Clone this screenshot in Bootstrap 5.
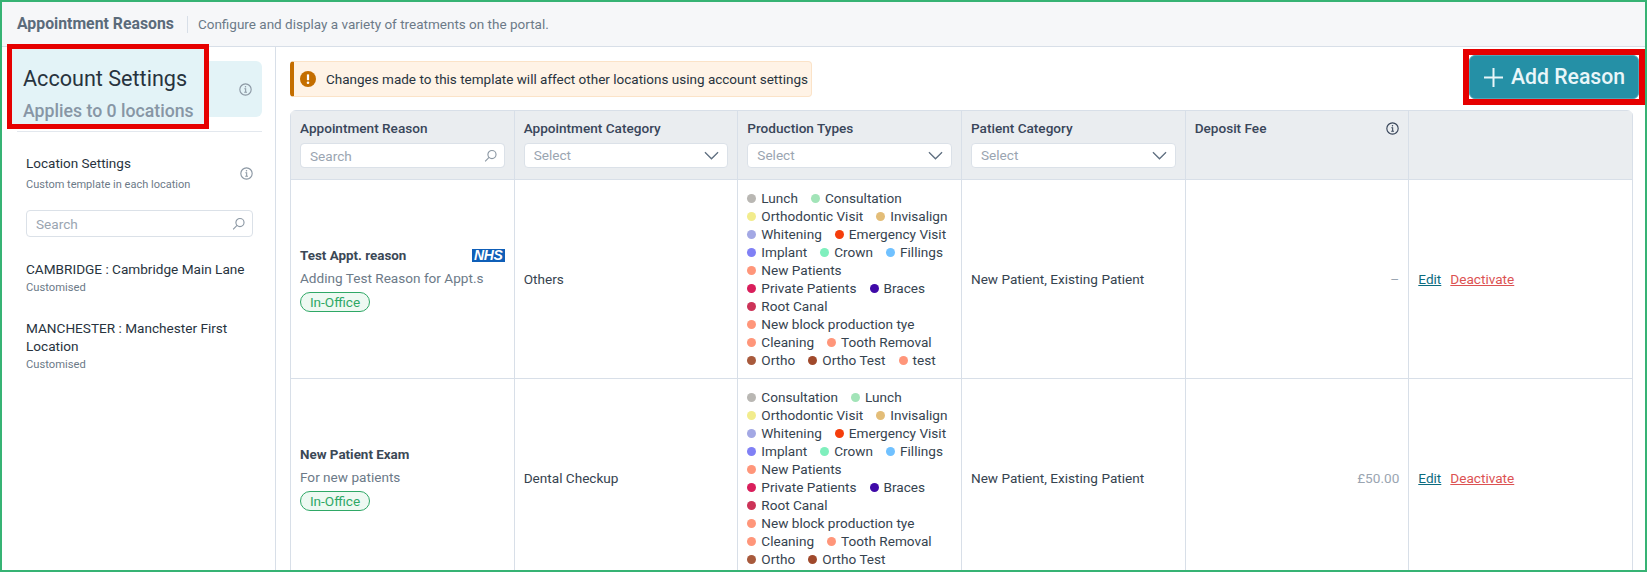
<!doctype html>
<html lang="en">
<head>
<meta charset="utf-8">
<title>Appointment Reasons</title>
<link href="https://cdn.jsdelivr.net/npm/bootstrap@5.3.0/dist/css/bootstrap.min.css" rel="stylesheet">
<style>
html,body{margin:0;height:572px;overflow:hidden;background:#fff}
body{font-family:Roboto,"Liberation Sans",sans-serif;font-size:13.6px;color:#36434f}
.shot{height:572px;border:2px solid #36b374;overflow:hidden;background:#fff}
.page-head{height:45px;background:#f6f7f9;border-bottom:1px solid #d8dfe8;padding-left:15px}
.page-title{font-size:15.8px;font-weight:700;color:#5b6b7b;margin:0}
.page-sub{font-size:13.5px;color:#6c7a88;border-left:1px solid #d8dfe8;margin-left:13px;padding-left:10px;line-height:17px}
.body-wrap{height:523px}
.side-col{width:274px;flex:none;border-right:1px solid #d8dfe8;padding:14px 13px 0 15px}
.acct-panel{height:56px;background:#e3f3f7;border-radius:6px}
.acct-mark{position:absolute;left:-10px;top:-17px;width:202px;height:85px;border:5px solid #e60000;background:#e3f3f7;padding:14px 0 0 11px}
.acct-name{font-size:21.6px;line-height:32px;color:#28333e}
.acct-sub{font-size:17.7px;line-height:26px;font-weight:500;color:#8796a5;margin-top:3px;white-space:nowrap}
.info-ico{width:13px;height:13px;color:#8c98a4;flex:none}
.acct-panel .info-ico{margin-right:2px}
.side-rule{border-top:1px solid #e3e8ee;margin-top:14px}
.loc-head{padding:22px 9px 0 9px}
.loc-title{font-size:13.5px;line-height:18px;color:#28333e}
.loc-note{font-size:11px;line-height:14px;color:#6c7a88;margin-top:6px}
.field-wrap{position:relative}
.side-search{margin:18px 9px 0 9px}
.form-control.fld,.form-select.fld{height:25px;min-height:25px;padding:0 9px;font-size:13.6px;line-height:23px;border-color:#dbe1e8;border-radius:4px;color:#9aa5b1;background-color:#fff}
.side-search .form-control.fld{height:27px;line-height:25px}
.form-control.fld::placeholder{color:#9aa5b1;opacity:1}
.form-select.fld{background-image:url("data:image/svg+xml,%3csvg xmlns='http://www.w3.org/2000/svg' viewBox='0 0 16 9'%3e%3cpath fill='none' stroke='%235f6f80' stroke-width='1.4' d='M1 1l7 7 7-7'/%3e%3c/svg%3e");background-position:right 8px center;background-size:15px 9px}
.search-ico{position:absolute;right:8px;top:50%;transform:translateY(-50%);width:13px;height:13px;color:#8c98a4}
.loc-list{margin:23px 9px 0 9px}
.loc-item{margin-bottom:24px}
.loc-name{font-size:13.6px;line-height:18px;color:#28333e;margin-right:-4px}
.loc-state{font-size:11.2px;line-height:14px;color:#6c7a88;margin-top:3px}
.main-col{min-width:0;flex:1;padding-top:2px}
.top-row{height:61px;padding-left:14px}
.warn-box{height:36px;margin-top:12px;background:#fff3e6;border:1px solid #fbe3c8;border-left:4px solid #c46e00;border-radius:4px;padding:0 2px 0 6px;gap:10px;font-size:13.5px;color:#28333e;width:522px}
.warn-ico{width:16px;height:16px;flex:none}
.add-frame{border:6px solid #e60000;height:56px;width:182px;flex:none}
.btn.add-btn{width:100%;height:100%;padding:0 0 0 14px;border:1px solid #4ea6b8;border-radius:6px;background:#2590a6;color:#e9f6f9;font-size:21.2px;font-weight:500;line-height:1;gap:8px;display:flex;align-items:center}
.add-btn svg{width:19px;height:19px;flex:none}
.tbl-wrap{margin:0 12px 0 14px;border-radius:6px 6px 0 0;overflow:hidden}
.table.appt-table{table-layout:fixed;width:100%;margin:0;--bs-table-border-color:#d8dfe8;color:#36434f;font-size:13.6px;border-color:#d8dfe8}
.table.appt-table>thead>tr>th{background:#eaedf0;padding:8px 9px 11px;font-weight:500;color:#39465a;line-height:18px;vertical-align:top;box-shadow:none}
.table.appt-table>tbody>tr>td{padding:9px;vertical-align:middle;line-height:18px;box-shadow:none}
.th-label{display:block;margin-bottom:6px}
.reason-name{font-weight:700;color:#3b4856;font-size:13.4px;line-height:18px}
.nhs-logo{width:33px;height:13px;background:#0f5fb8;color:#fff;font:italic 700 14px/13px "Liberation Sans",sans-serif;text-align:center;flex:none;letter-spacing:-.4px}
.reason-sub{color:#6c7a88;line-height:18px;margin-top:4px}
.visit-pill{display:inline-block;height:20px;line-height:18px;width:70px;text-align:center;border:1px solid #2fa866;border-radius:10px;background:#eef9f2;color:#2fa866;margin-top:5px}
.tag-list{display:flex;flex-wrap:wrap;column-gap:13px}
.tag-line{flex-basis:100%;height:0}
.tag-item{display:inline-flex;align-items:center;gap:5px;white-space:nowrap;height:18px;color:#36434f}
.tag-dot{width:9px;height:9px;border-radius:50%;flex:none}
.fee-cell{text-align:right;color:#9aa5b1}
.act-link{margin-right:9px;text-decoration:underline}
.act-edit{color:#0c6b7e}
.act-off{color:#dc5252}
</style>
</head>
<body>
<div class="shot">
  <div class="page-head d-flex align-items-center">
    <h1 class="page-title">Appointment Reasons</h1>
    <span class="page-sub">Configure and display a variety of treatments on the portal.</span>
  </div>
  <div class="body-wrap d-flex">
    <aside class="side-col">
      <div class="acct-panel position-relative d-flex align-items-center justify-content-end pe-2">
        <svg class="info-ico" viewBox="0 0 16 16" fill="none" stroke="currentColor"><circle cx="8" cy="8" r="7" stroke-width="1.4"/><path d="M6.6 7h1.6v4.4M6.4 11.4h3.4" stroke-width="1.3"/><circle cx="8" cy="4.6" r=".9" fill="currentColor" stroke="none"/></svg>
        <div class="acct-mark">
          <div class="acct-name">Account Settings</div>
          <div class="acct-sub">Applies to 0 locations</div>
        </div>
      </div>
      <div class="side-rule"></div>
      <div class="loc-head d-flex justify-content-between align-items-center">
        <div>
          <div class="loc-title">Location Settings</div>
          <div class="loc-note">Custom template in each location</div>
        </div>
        <svg class="info-ico" viewBox="0 0 16 16" fill="none" stroke="currentColor"><circle cx="8" cy="8" r="7" stroke-width="1.4"/><path d="M6.6 7h1.6v4.4M6.4 11.4h3.4" stroke-width="1.3"/><circle cx="8" cy="4.6" r=".9" fill="currentColor" stroke="none"/></svg>
      </div>
      <div class="side-search field-wrap">
        <input class="form-control fld" type="text" placeholder="Search" aria-label="Search locations">
        <svg class="search-ico" viewBox="0 0 16 16" fill="none" stroke="currentColor" stroke-width="1.4"><circle cx="9.8" cy="6.2" r="5"/><path d="M6.2 9.8 1.4 14.6"/></svg>
      </div>
      <div class="loc-list">
        <div class="loc-item">
          <div class="loc-name">CAMBRIDGE : Cambridge Main Lane</div>
          <div class="loc-state">Customised</div>
        </div>
        <div class="loc-item">
          <div class="loc-name">MANCHESTER : Manchester First Location</div>
          <div class="loc-state">Customised</div>
        </div>
      </div>
    </aside>
    <main class="main-col">
      <div class="top-row d-flex justify-content-between align-items-start">
        <div class="warn-box d-flex align-items-center">
          <svg class="warn-ico" viewBox="0 0 16 16"><circle cx="8" cy="8" r="8" fill="#c46e00"/><path d="M8 3.4v5.8" stroke="#fff" stroke-width="2.2"/><circle cx="8" cy="11.8" r="1.3" fill="#fff"/></svg>
          <span>Changes made to this template will affect other locations using account settings</span>
        </div>
        <div class="add-frame">
          <button type="button" class="btn add-btn">
            <svg viewBox="0 0 19 19" fill="none" stroke="currentColor" stroke-width="2"><path d="M9.5 0v19M0 9.5h19"/></svg>
            <span>Add Reason</span>
          </button>
        </div>
      </div>
      <div class="tbl-wrap">
        <table class="table table-bordered appt-table">
          <thead>
            <tr>
              <th><span class="th-label">Appointment Reason</span>
                <div class="field-wrap">
                  <input class="form-control fld" type="text" placeholder="Search" aria-label="Search reasons">
                  <svg class="search-ico" viewBox="0 0 16 16" fill="none" stroke="currentColor" stroke-width="1.4"><circle cx="9.8" cy="6.2" r="5"/><path d="M6.2 9.8 1.4 14.6"/></svg>
                </div>
              </th>
              <th><span class="th-label">Appointment Category</span>
                <select class="form-select fld" aria-label="Appointment Category"><option>Select</option></select></th>
              <th><span class="th-label">Production Types</span>
                <select class="form-select fld" aria-label="Production Types"><option>Select</option></select></th>
              <th><span class="th-label">Patient Category</span>
                <select class="form-select fld" aria-label="Patient Category"><option>Select</option></select></th>
              <th>
                <div class="d-flex justify-content-between align-items-center">
                  <span>Deposit Fee</span>
                  <svg class="info-ico" style="color:#39465a" viewBox="0 0 16 16" fill="none" stroke="currentColor"><circle cx="8" cy="8" r="7" stroke-width="1.4"/><path d="M6.6 7h1.6v4.4M6.4 11.4h3.4" stroke-width="1.3"/><circle cx="8" cy="4.6" r=".9" fill="currentColor" stroke="none"/></svg>
                </div>
              </th>
              <th></th>
            </tr>
          </thead>
          <tbody>
            <tr>
              <td>
                <div class="d-flex justify-content-between align-items-center">
                  <span class="reason-name">Test Appt. reason</span>
                  <span class="nhs-logo">NHS</span>
                </div>
                <div class="reason-sub">Adding Test Reason for Appt.s</div>
                <span class="visit-pill">In-Office</span>
              </td>
              <td>Others</td>
              <td>
                <div class="tag-list">
                  <span class="tag-item"><i class="tag-dot" style="background:#b9b7b3"></i>Lunch</span>
                  <span class="tag-item"><i class="tag-dot" style="background:#a2e4b8"></i>Consultation</span><span class="tag-line"></span>
                  <span class="tag-item"><i class="tag-dot" style="background:#f2ec8c"></i>Orthodontic Visit</span>
                  <span class="tag-item"><i class="tag-dot" style="background:#e3bd78"></i>Invisalign</span><span class="tag-line"></span>
                  <span class="tag-item"><i class="tag-dot" style="background:#a3a8e4"></i>Whitening</span>
                  <span class="tag-item"><i class="tag-dot" style="background:#f53d0b"></i>Emergency Visit</span><span class="tag-line"></span>
                  <span class="tag-item"><i class="tag-dot" style="background:#8080f5"></i>Implant</span>
                  <span class="tag-item"><i class="tag-dot" style="background:#7fefbd"></i>Crown</span>
                  <span class="tag-item"><i class="tag-dot" style="background:#70c1ff"></i>Fillings</span><span class="tag-line"></span>
                  <span class="tag-item"><i class="tag-dot" style="background:#ff967a"></i>New Patients</span><span class="tag-line"></span>
                  <span class="tag-item"><i class="tag-dot" style="background:#d91e5b"></i>Private Patients</span>
                  <span class="tag-item"><i class="tag-dot" style="background:#3f0aa8"></i>Braces</span><span class="tag-line"></span>
                  <span class="tag-item"><i class="tag-dot" style="background:#cc3358"></i>Root Canal</span><span class="tag-line"></span>
                  <span class="tag-item"><i class="tag-dot" style="background:#ff967a"></i>New block production tye</span><span class="tag-line"></span>
                  <span class="tag-item"><i class="tag-dot" style="background:#ff967a"></i>Cleaning</span>
                  <span class="tag-item"><i class="tag-dot" style="background:#ff967a"></i>Tooth Removal</span><span class="tag-line"></span>
                  <span class="tag-item"><i class="tag-dot" style="background:#a85a3c"></i>Ortho</span>
                  <span class="tag-item"><i class="tag-dot" style="background:#a0492b"></i>Ortho Test</span>
                  <span class="tag-item"><i class="tag-dot" style="background:#ff967a"></i>test</span>
                </div>
              </td>
              <td>New Patient, Existing Patient</td>
              <td class="fee-cell">–</td>
              <td><a href="#" class="act-link act-edit">Edit</a><a href="#" class="act-link act-off">Deactivate</a></td>
            </tr>
            <tr>
              <td>
                <div class="reason-name">New Patient Exam</div>
                <div class="reason-sub">For new patients</div>
                <span class="visit-pill">In-Office</span>
              </td>
              <td>Dental Checkup</td>
              <td>
                <div class="tag-list">
                  <span class="tag-item"><i class="tag-dot" style="background:#b9b7b3"></i>Consultation</span>
                  <span class="tag-item"><i class="tag-dot" style="background:#a2e4b8"></i>Lunch</span><span class="tag-line"></span>
                  <span class="tag-item"><i class="tag-dot" style="background:#f2ec8c"></i>Orthodontic Visit</span>
                  <span class="tag-item"><i class="tag-dot" style="background:#e3bd78"></i>Invisalign</span><span class="tag-line"></span>
                  <span class="tag-item"><i class="tag-dot" style="background:#a3a8e4"></i>Whitening</span>
                  <span class="tag-item"><i class="tag-dot" style="background:#f53d0b"></i>Emergency Visit</span><span class="tag-line"></span>
                  <span class="tag-item"><i class="tag-dot" style="background:#8080f5"></i>Implant</span>
                  <span class="tag-item"><i class="tag-dot" style="background:#7fefbd"></i>Crown</span>
                  <span class="tag-item"><i class="tag-dot" style="background:#70c1ff"></i>Fillings</span><span class="tag-line"></span>
                  <span class="tag-item"><i class="tag-dot" style="background:#ff967a"></i>New Patients</span><span class="tag-line"></span>
                  <span class="tag-item"><i class="tag-dot" style="background:#d91e5b"></i>Private Patients</span>
                  <span class="tag-item"><i class="tag-dot" style="background:#3f0aa8"></i>Braces</span><span class="tag-line"></span>
                  <span class="tag-item"><i class="tag-dot" style="background:#cc3358"></i>Root Canal</span><span class="tag-line"></span>
                  <span class="tag-item"><i class="tag-dot" style="background:#ff967a"></i>New block production tye</span><span class="tag-line"></span>
                  <span class="tag-item"><i class="tag-dot" style="background:#ff967a"></i>Cleaning</span>
                  <span class="tag-item"><i class="tag-dot" style="background:#ff967a"></i>Tooth Removal</span><span class="tag-line"></span>
                  <span class="tag-item"><i class="tag-dot" style="background:#a85a3c"></i>Ortho</span>
                  <span class="tag-item"><i class="tag-dot" style="background:#a0492b"></i>Ortho Test</span>
                </div>
              </td>
              <td>New Patient, Existing Patient</td>
              <td class="fee-cell">£50.00</td>
              <td><a href="#" class="act-link act-edit">Edit</a><a href="#" class="act-link act-off">Deactivate</a></td>
            </tr>
          </tbody>
        </table>
      </div>
    </main>
  </div>
</div>
<script src="https://cdn.jsdelivr.net/npm/bootstrap@5.3.0/dist/js/bootstrap.bundle.min.js"></script>
</body>
</html>
